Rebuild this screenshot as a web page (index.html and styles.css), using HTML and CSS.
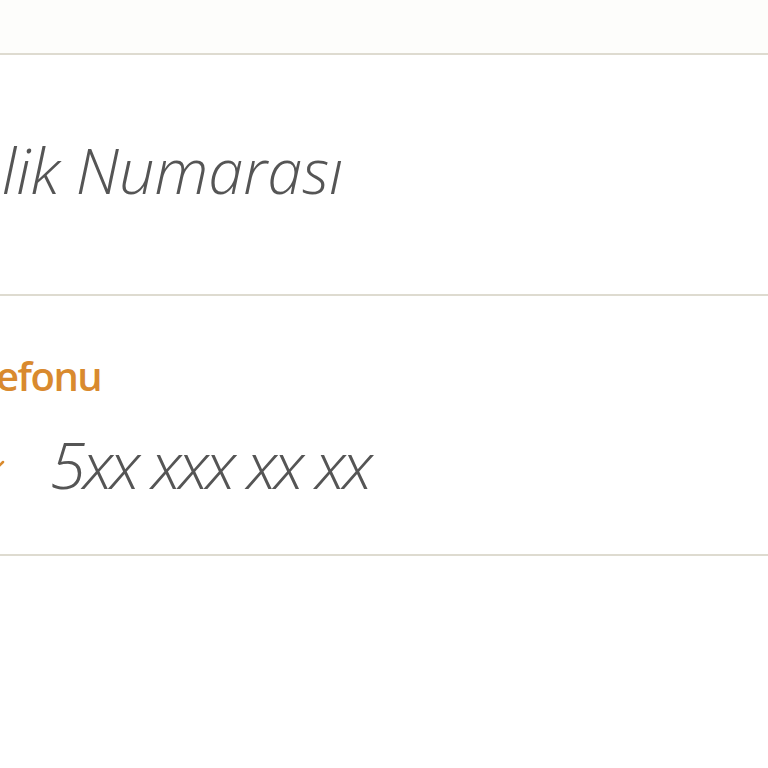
FILE: index.html
```html
<!DOCTYPE html>
<html lang="tr">
<head>
<meta charset="utf-8">
<title>Form</title>
<link rel="stylesheet" href="styles.css">
</head>
<body>
<div class="form">
  <div class="row row-top"></div>
  <div class="row row-id">
    <div class="placeholder id-text">T.C. Kimlik Numarası</div>
  </div>
  <div class="row row-phone">
    <div class="label">Cep Telefonu</div>
    <div class="phone-line">
      <span class="prefix">+90
        <svg class="caret" width="16" height="10" viewBox="0 0 16 10"><path d="M2 2 L8 8 L14 2" fill="none" stroke="#d98a2e" stroke-width="2.5" stroke-linecap="round"/></svg>
      </span>
      <span class="placeholder phone-text">5xx xxx xx xx</span>
    </div>
  </div>
</div>
</body>
</html>
```

FILE: styles.css
```css
html, body {
  margin: 0;
  padding: 0;
  background: #ffffff;
  overflow: hidden;
  width: 768px;
  height: 768px;
}
.form {
  display: flex;
  flex-direction: column;
  width: 768px;
}
.row {
  border-bottom: 2px solid #dedbd0;
  box-sizing: border-box;
}
.row-top {
  height: 55px;
  background: #fdfdfb;
}
.row-id {
  height: 241px;
  display: flex;
  align-items: flex-start;
}
.placeholder {
  font-family: "Open Sans", sans-serif;
  font-style: italic;
  font-weight: 300;
  color: #555555;
  white-space: nowrap;
}
.id-text {
  font-size: 63px;
  letter-spacing: 0;
  line-height: 1;
  margin-top: 83px;
  margin-left: -214px;
}
.row-phone {
  height: 260px;
  display: flex;
  flex-direction: column;
}
.label {
  font-family: "Open Sans", sans-serif;
  font-weight: 600;
  font-size: 40px;
  letter-spacing: -1.5px;
  line-height: 1;
  color: #d98a2e;
  white-space: nowrap;
  margin-top: 60px;
  margin-left: -134px;
}
.phone-line {
  display: flex;
  align-items: center;
  margin-top: 36px;
  margin-left: -90px;
  gap: 40px;
}
.prefix {
  display: flex;
  align-items: center;
  gap: 10px;
  font-family: "Open Sans", sans-serif;
  font-size: 40px;
  color: #4a4a4a;
  width: 100px;
}
.phone-text {
  font-size: 65px;
  letter-spacing: -3px;
  line-height: 1;
}
```
